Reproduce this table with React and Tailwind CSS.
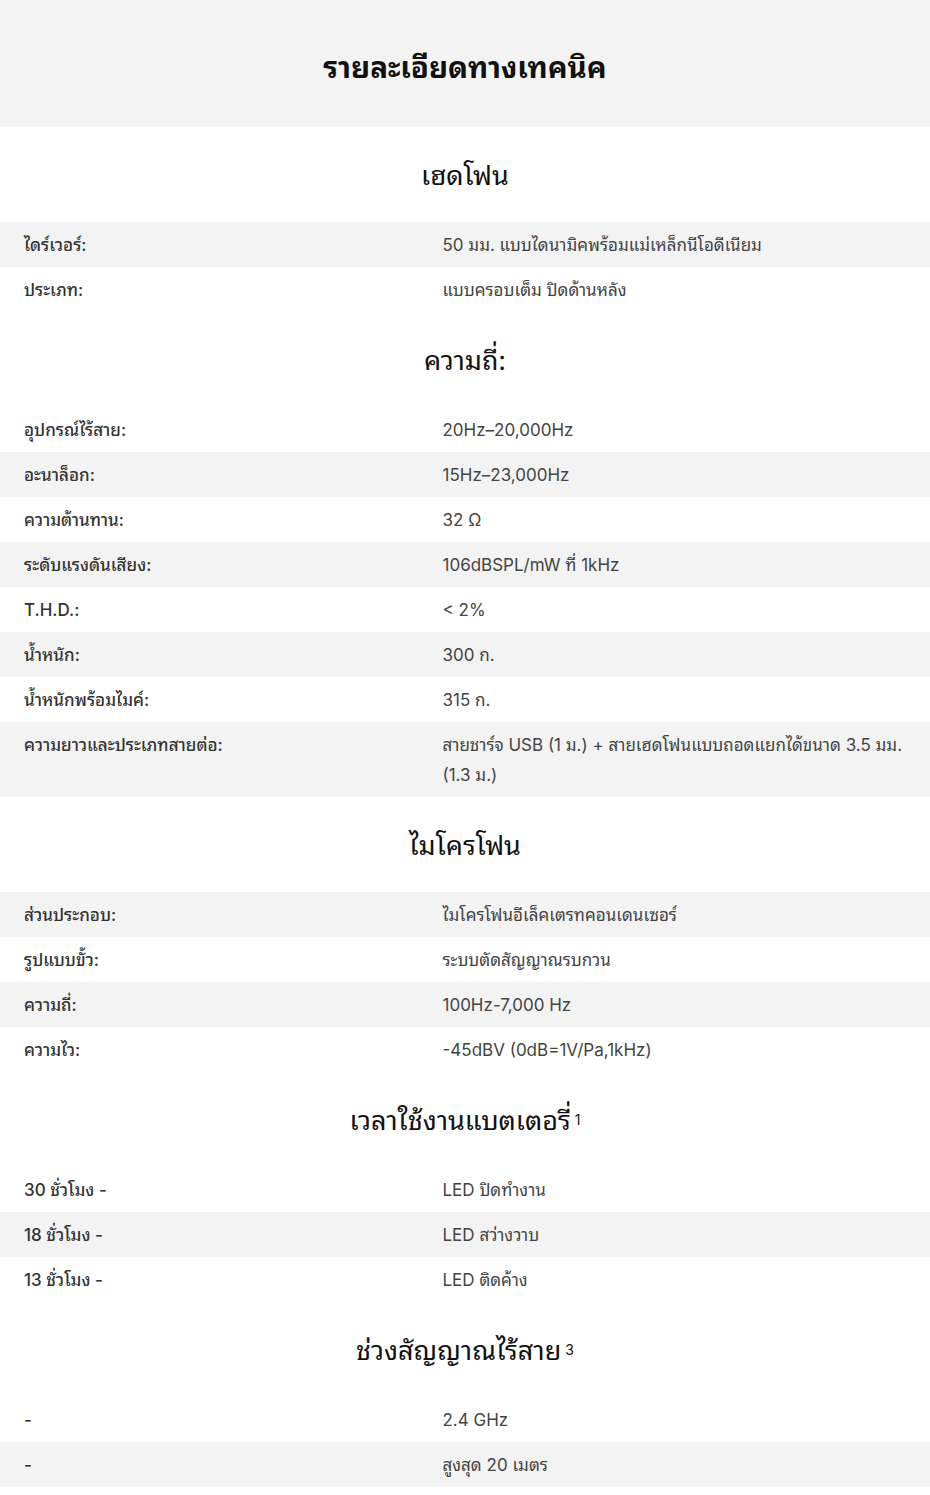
const sections = [
  {
    title: 'เฮดโฟน',
    rows: [
      ['ไดร์เวอร์:', '50 มม. แบบไดนามิคพร้อมแม่เหล็กนีโอดีเนียม', true],
      ['ประเภท:', 'แบบครอบเต็ม ปิดด้านหลัง', false],
    ],
  },
  {
    title: 'ความถี่:',
    rows: [
      ['อุปกรณ์ไร้สาย:', '20Hz–20,000Hz', false],
      ['อะนาล็อก:', '15Hz–23,000Hz', true],
      ['ความต้านทาน:', '32 Ω', false],
      ['ระดับแรงดันเสียง:', '106dBSPL/mW ที่ 1kHz', true],
      ['T.H.D.:', '< 2%', false],
      ['น้ำหนัก:', '300 ก.', true],
      ['น้ำหนักพร้อมไมค์:', '315 ก.', false],
      ['ความยาวและประเภทสายต่อ:', 'สายชาร์จ USB (1 ม.) + สายเฮดโฟนแบบถอดแยกได้ขนาด 3.5 มม. (1.3\u00a0ม.)', true],
    ],
  },
  {
    title: 'ไมโครโฟน',
    rows: [
      ['ส่วนประกอบ:', 'ไมโครโฟนอีเล็คเตรทคอนเดนเซอร์', true],
      ['รูปแบบขั้ว:', 'ระบบตัดสัญญาณรบกวน', false],
      ['ความถี่:', '100Hz-7,000 Hz', true],
      ['ความไว:', '-45dBV (0dB=1V/Pa,1kHz)', false],
    ],
  },
  {
    title: 'เวลาใช้งานแบตเตอรี่',
    sup: '1',
    rows: [
      ['30 ชั่วโมง -', 'LED ปิดทำงาน', false],
      ['18 ชั่วโมง -', 'LED สว่างวาบ', true],
      ['13 ชั่วโมง -', 'LED ติดค้าง', false],
    ],
  },
  {
    title: 'ช่วงสัญญาณไร้สาย',
    sup: '3',
    rows: [
      ['-', '2.4 GHz', false],
      ['-', 'สูงสุด 20 เมตร', true],
    ],
  },
]

function SpecRow({ label, value, shaded }) {
  return (
    <div className={`grid grid-cols-[45%_55%] text-[17px] leading-[30px] ${shaded ? 'bg-[#f3f3f3]' : 'bg-white'}`}>
      <div className="pl-6 pr-4 pt-2 pb-[7px] font-medium text-[#333]">{label}</div>
      <div className="pl-6 pr-6 pt-2 pb-[7px] text-[#444]">{value}</div>
    </div>
  )
}

export default function App() {
  return (
    <div
      className="w-[930px] min-h-[1495px] bg-white pb-2"
      style={{
        fontFamily:
          'Inter, "Noto Sans Thai Looped", "Noto Serif Thai", Loma, Garuda, "Noto Sans Thai", sans-serif',
      }}
    >
      <div className="h-[127px] bg-[#f3f3f3] flex items-center justify-center pt-2">
        <h1 className="text-[29.5px] font-bold text-[#111]">รายละเอียดทางเทคนิค</h1>
      </div>

      {sections.map((s) => (
        <section key={s.title}>
          <div className="h-[95px] flex items-center justify-center pt-1">
            <h2 className="text-[27px] text-[#111]">
              {s.title}
              {s.sup && <sup className="text-[14px] ml-1 relative -top-[5px]">{s.sup}</sup>}
            </h2>
          </div>
          {s.rows.map(([label, value, shaded]) => (
            <SpecRow key={label + value} label={label} value={value} shaded={shaded} />
          ))}
        </section>
      ))}
    </div>
  )
}
